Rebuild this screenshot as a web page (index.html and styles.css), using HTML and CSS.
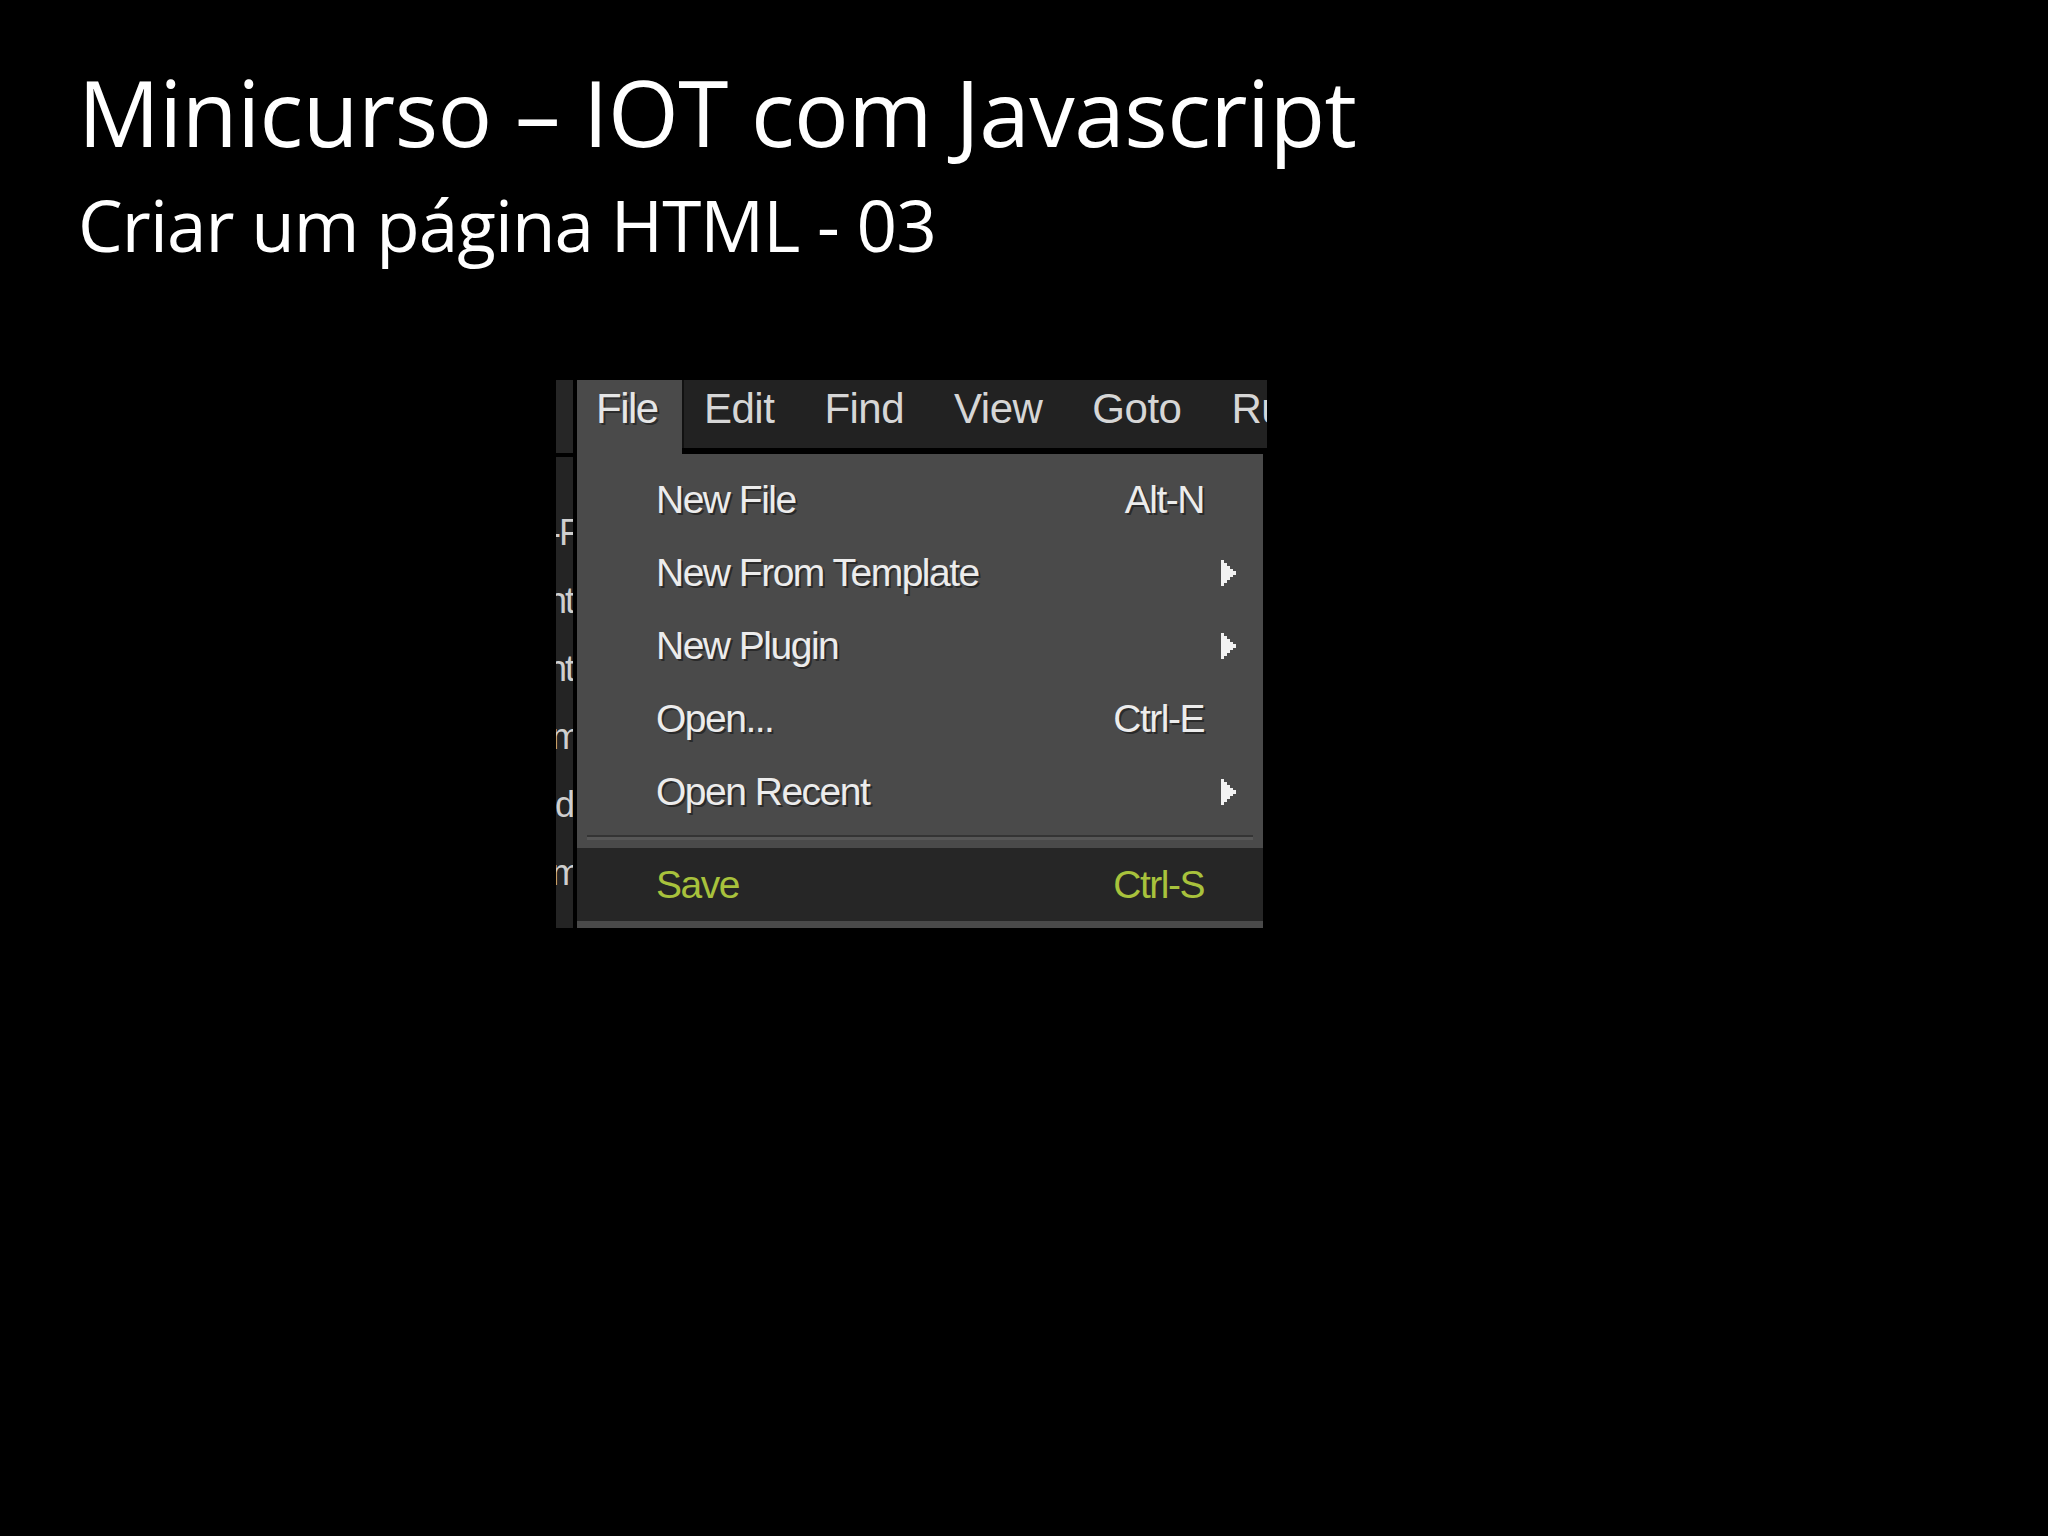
FILE: index.html
```html
<!DOCTYPE html>
<html lang="pt">
<head>
<meta charset="utf-8">
<title>Minicurso – IOT com Javascript</title>
<link rel="stylesheet" href="styles.css">
</head>
<body>
<div class="slide">
  <header class="heading">
    <h1 class="title">Minicurso – IOT com Javascript</h1>
    <h2 class="subtitle">Criar um página HTML - 03</h2>
  </header>

  <div class="shot">
    <div class="side">
      <div class="side-top"></div>
      <div class="side-body">
        <div class="frag frag-cut">-F</div>
        <div class="frag">nt</div>
        <div class="frag">nt</div>
        <div class="frag frag-cut">m</div>
        <div class="frag">d</div>
        <div class="frag frag-cut">m</div>
      </div>
    </div>

    <div class="app">
      <div class="menubar">
        <div class="tab-active">File</div>
        <div class="bar-rest">
          <span class="bar-item">Edit</span>
          <span class="bar-item">Find</span>
          <span class="bar-item">View</span>
          <span class="bar-item">Goto</span>
          <span class="bar-item">Run</span>
        </div>
      </div>

      <div class="dropdown">
        <div class="row"><span class="label">New File</span><span class="key">Alt-N</span></div>
        <div class="row"><span class="label">New From Template</span>
          <svg class="arrow" width="15" height="26" viewBox="0 0 15 26"><polygon points="0,0 3,0 3,3 6,3 6,6 9,6 9,9 12,9 12,11 15,11 15,15 12,15 12,17 9,17 9,20 6,20 6,23 3,23 3,26 0,26" fill="#f2f2f2"/></svg>
        </div>
        <div class="row"><span class="label">New Plugin</span>
          <svg class="arrow" width="15" height="26" viewBox="0 0 15 26"><polygon points="0,0 3,0 3,3 6,3 6,6 9,6 9,9 12,9 12,11 15,11 15,15 12,15 12,17 9,17 9,20 6,20 6,23 3,23 3,26 0,26" fill="#f2f2f2"/></svg>
        </div>
        <div class="row"><span class="label">Open...</span><span class="key">Ctrl-E</span></div>
        <div class="row"><span class="label">Open Recent</span>
          <svg class="arrow" width="15" height="26" viewBox="0 0 15 26"><polygon points="0,0 3,0 3,3 6,3 6,6 9,6 9,9 12,9 12,11 15,11 15,15 12,15 12,17 9,17 9,20 6,20 6,23 3,23 3,26 0,26" fill="#f2f2f2"/></svg>
        </div>
        <div class="separator"></div>
        <div class="row row-hover"><span class="label">Save</span><span class="key">Ctrl-S</span></div>
      </div>
    </div>
  </div>
</div>
</body>
</html>
```

FILE: styles.css
```css
html, body {
  margin: 0;
  padding: 0;
  background: #000;
}

body {
  width: 2048px;
  height: 1536px;
  overflow: hidden;
}

.slide {
  padding-top: 67px;
}

.heading {
  padding-left: 78px;
}

.title {
  margin: 0;
  font-family: "Open Sans", "Noto Sans", sans-serif;
  font-weight: 400;
  font-size: 91px;
  line-height: 91px;
  color: #fff;
  letter-spacing: -0.5px;
  white-space: nowrap;
}

.subtitle {
  margin: 31px 0 0 0;
  font-family: "Open Sans", "Noto Sans", sans-serif;
  font-weight: 400;
  font-size: 71px;
  line-height: 71px;
  color: #fff;
  letter-spacing: -0.9px;
  white-space: nowrap;
}

.shot {
  display: flex;
  margin: 120px 0 0 556px;
  font-family: "Liberation Sans", Arial, sans-serif;
}

/* clipped editor sidebar on the left */
.side {
  width: 17px;
  margin-right: 4px;
  display: flex;
  flex-direction: column;
  gap: 4px;
}

.side-top {
  height: 73px;
  background: #262626;
}

.side-body {
  height: 471px;
  background: #242424;
  overflow: hidden;
  padding-top: 42px;
  box-sizing: border-box;
}

.frag {
  display: flex;
  justify-content: flex-end;
  font-size: 36px;
  line-height: 68px;
  height: 68px;
  color: #cfcfcf;
  white-space: nowrap;
  letter-spacing: -2px;
}

.frag-cut {
  margin-right: -6px;
}

/* application window */
.app {
  width: 690px;
  display: flex;
  flex-direction: column;
}

.menubar {
  display: flex;
  height: 74px;
}

.tab-active {
  width: 105px;
  box-sizing: border-box;
  padding-left: 19px;
  background: #4a4a4a;
  font-size: 42px;
  line-height: 58px;
  color: #e6e6e6;
  letter-spacing: -1.5px;
  text-shadow: 2px 2px 0 #2c2c2c;
}

.bar-rest {
  flex: 1;
  display: flex;
  gap: 50px;
  padding-left: 20px;
  height: 68px;
  box-sizing: border-box;
  background: #222;
  border-left: 2px solid #111;
  overflow: hidden;
  white-space: nowrap;
}

.bar-item {
  font-size: 42px;
  line-height: 58px;
  color: #d6d6d6;
  letter-spacing: -0.5px;
}

.dropdown {
  width: 686px;
  background: #4a4a4a;
  padding: 9px 0 7px 0;
}

.row {
  display: flex;
  align-items: center;
  height: 73px;
  padding: 0 27px 0 79px;
  font-size: 39px;
  line-height: 73px;
  letter-spacing: -1.5px;
  color: #ececec;
  text-shadow: 2px 2px 0 #2a2a2a;
}

.label {
  flex: 1;
  white-space: nowrap;
}

.key {
  margin-right: 32px;
  white-space: nowrap;
}

.arrow {
  display: block;
  flex: none;
}

.separator {
  margin: 7px 10px 8px 10px;
  height: 2px;
  background: #343434;
  border-bottom: 3px solid #575757;
}

.row-hover {
  background: #262626;
  color: #a8c23c;
  text-shadow: none;
}
```
